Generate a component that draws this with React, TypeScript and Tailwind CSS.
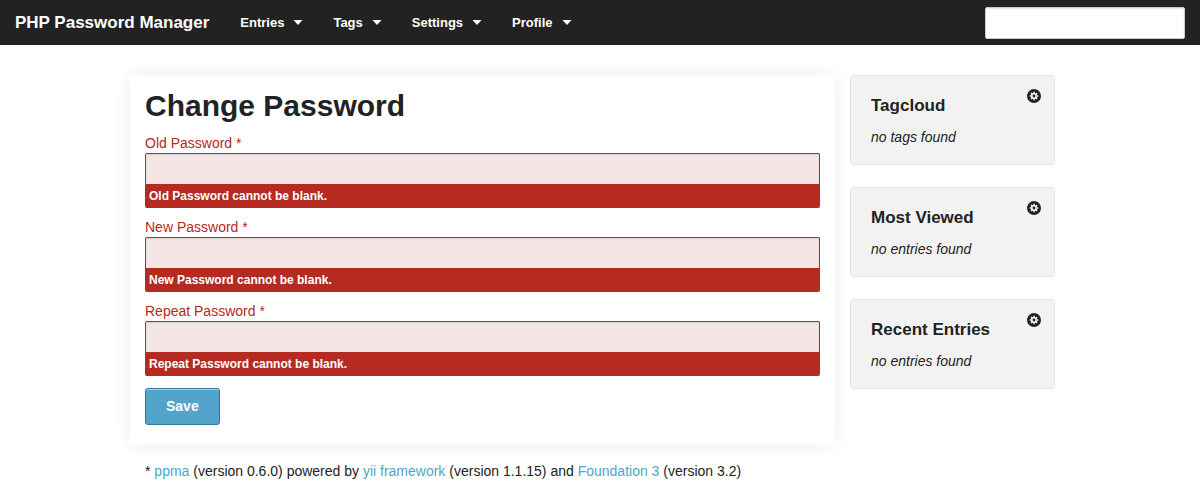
import { useId } from "react";

const menus = ["Entries", "Tags", "Settings", "Profile"];
const fields = ["Old Password", "New Password", "Repeat Password"];
const panels = [
  { title: "Tagcloud", text: "no tags found" },
  { title: "Most Viewed", text: "no entries found" },
  { title: "Recent Entries", text: "no entries found" },
];

function GearIcon() {
  const teeth = [0, 45, 90, 135];
  return (
    <svg viewBox="0 0 14 14" className="size-[14px]" aria-hidden="true">
      <circle cx="7" cy="7" r="7" fill="#222222" />
      <g stroke="#f2f2f2" strokeWidth="1.5">
        {teeth.map((a) => (
          <path key={a} d="M7 2.7V11.3" transform={`rotate(${a} 7 7)`} />
        ))}
      </g>
      <circle cx="7" cy="7" r="3.1" fill="#f2f2f2" />
      <circle cx="7" cy="7" r="1.4" fill="#222222" />
    </svg>
  );
}

function TopBar() {
  return (
    <header className="flex h-[45px] items-center justify-between bg-[#222222] px-[15px] text-white">
      <nav className="flex items-center gap-[31px]">
        <a href="#" className="text-[17px] font-bold">PHP Password Manager</a>
        <div className="flex items-center gap-[30px]">
          {menus.map((name) => (
            <button key={name} type="button" className="flex items-center gap-[9px] text-[13px] font-bold">
              {name}
              <svg viewBox="0 0 10 5" className="h-[5px] w-[10px]" aria-hidden="true">
                <path d="M0.5 0H9.5L5 5Z" fill="currentColor" />
              </svg>
            </button>
          ))}
        </div>
      </nav>
      <input
        type="search"
        aria-label="Search"
        className="h-8 w-[200px] rounded-[2px] border border-[#cccccc] bg-white px-2 text-sm text-black shadow-[inset_0_1px_2px_rgba(0,0,0,0.1)]"
      />
    </header>
  );
}

function PasswordField({ label }: { label: string }) {
  const id = useId();
  return (
    <div>
      <label htmlFor={id} className="block text-[14px] leading-[18px] text-[#b52a21]">
        {label} *
      </label>
      <input
        id={id}
        type="password"
        aria-invalid="true"
        aria-describedby={`${id}-error`}
        className="mt-px block h-[31px] w-full rounded-t-[2px] border border-b-0 border-[#b52a21] bg-[#f5e6e5] px-1 text-sm shadow-[inset_0_1px_2px_rgba(0,0,0,0.1)]"
      />
      <small
        id={`${id}-error`}
        className="block rounded-b-[2px] bg-[#b52a21] px-1 text-[12px] leading-6 font-bold text-white"
      >
        {label} cannot be blank.
      </small>
    </div>
  );
}

export default function App() {
  return (
    <div className="font-['Liberation_Sans',Arial,sans-serif] text-[#222222]">
      <TopBar />
      <div className="mx-auto max-w-[970px] pt-[30px] pr-[30px] pl-[15px]">
        <div className="flex items-start gap-[15px]">
          <main className="min-w-0 flex-1 rounded-[3px] bg-white px-[15px] pt-[11px] pb-5 shadow-[0_0_20px_rgba(0,0,0,0.08)]">
            <h1 className="mb-2 text-[30px] leading-10 font-bold">Change Password</h1>
            <form onSubmit={(e) => e.preventDefault()}>
              <div className="flex flex-col gap-[10px]">
                {fields.map((label) => (
                  <PasswordField key={label} label={label} />
                ))}
              </div>
              <button
                type="submit"
                className="mt-3 block h-[37px] rounded-[3px] border border-[#347896] bg-[#52a4ca] px-5 text-[14px] font-bold text-white shadow-[inset_0_1px_0_rgba(255,255,255,0.5)]"
              >
                Save
              </button>
            </form>
          </main>
          <aside className="flex w-[205px] shrink-0 flex-col gap-[22px]">
            {panels.map((panel) => (
              <section key={panel.title} className="rounded-[3px] border border-[#e6e6e6] bg-[#f2f2f2] pt-[13px] pr-[13px] pb-[17px] pl-5">
                <div className="flex items-start justify-between">
                  <h2 className="pt-[5px] text-[17px] leading-6 font-bold">{panel.title}</h2>
                  <button type="button" aria-label={`${panel.title} settings`}>
                    <GearIcon />
                  </button>
                </div>
                <p className="mt-[9px] text-[14px] leading-5 italic">{panel.text}</p>
              </section>
            ))}
          </aside>
        </div>
        <footer className="px-[15px] py-4 text-[14px] leading-5">
          * <a href="#" className="text-[#52a4ca]">ppma</a> (version 0.6.0) powered by{" "}
          <a href="#" className="text-[#52a4ca]">yii framework</a> (version 1.1.15) and{" "}
          <a href="#" className="text-[#52a4ca]">Foundation 3</a> (version 3.2)
        </footer>
      </div>
    </div>
  );
}
